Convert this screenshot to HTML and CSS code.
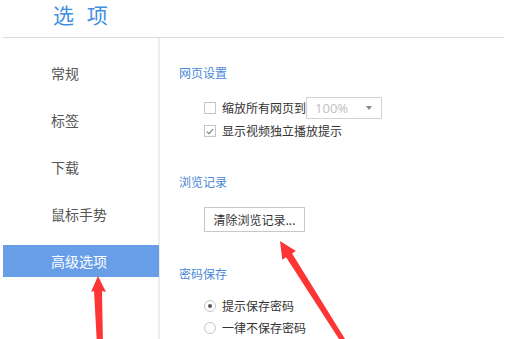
FILE: index.html
```html
<!DOCTYPE html>
<html lang="zh">
<head>
<meta charset="utf-8">
<link rel="stylesheet" href="styles.css">
</head>
<body>
<div class="page">
  <header class="header"><h1 class="title">选 项</h1></header>
  <div class="main">
    <nav class="sidebar">
      <div class="nav-item">常规</div>
      <div class="nav-item">标签</div>
      <div class="nav-item">下载</div>
      <div class="nav-item">鼠标手势</div>
      <div class="nav-item active">高级选项</div>
    </nav>
    <section class="content">
      <h2 class="sec-title">网页设置</h2>
      <div class="row row-first">
        <span class="checkbox"></span>
        <span class="label">缩放所有网页到</span>
        <span class="select"><span class="select-val">100%</span><span class="caret"></span></span>
      </div>
      <div class="row row-second">
        <span class="checkbox checked"><svg width="8" height="7" viewBox="0 0 8 7"><path d="M0.8 3.6 L3 5.6 L7.2 1" fill="none" stroke="#777" stroke-width="1.1"/></svg></span>
        <span class="label">显示视频独立播放提示</span>
      </div>
      <h2 class="sec-title sec-gap">浏览记录</h2>
      <button class="btn">清除浏览记录...</button>
      <h2 class="sec-title sec-gap2">密码保存</h2>
      <div class="row radio-first">
        <span class="radio on"></span>
        <span class="label">提示保存密码</span>
      </div>
      <div class="row radio-second">
        <span class="radio"></span>
        <span class="label">一律不保存密码</span>
      </div>
    </section>
  </div>
  <svg class="arrows" width="507" height="339" viewBox="0 0 507 339">
    <polygon fill="#fd3535" points="98,276 91,292 94,291 97,345 103,345 102,291 106,292"/>
    <polygon fill="#fd3535" points="280,241 282.3,259.7 286.1,257.3 344.7,347.9 348.9,345.3 292.1,253.5 295.9,251.1"/>
  </svg>
</div>
</body>
</html>
```

FILE: styles.css
```css
* { box-sizing: border-box; }
html, body { margin: 0; padding: 0; background: #fff; }
body {
  font-family: "Noto Sans CJK SC", "Noto Sans", sans-serif;
  color: #333;
  width: 507px;
  height: 339px;
  overflow: hidden;
}
.page { position: relative; width: 507px; height: 339px; padding-left: 3px; }
.header {
  height: 38px;
  width: 501px;
  border-bottom: 1px solid #dcdcdc;
}
.title {
  margin: 0;
  padding-left: 50px;
  font-size: 21px;
  line-height: 29px;
  font-weight: 400;
  color: #3f8fe4;
  word-spacing: 8px;
}
.main { display: flex; height: 301px; }
.sidebar {
  flex: none;
  width: 157px;
  padding-top: 19px;
  display: flex;
  flex-direction: column;
  gap: 15px;
  border-right: 2px solid #ececec;
}
.nav-item {
  height: 32px;
  line-height: 32px;
  padding-left: 48px;
  font-size: 14px;
  color: #555;
}
.nav-item.active {
  background: #689ee8;
  color: #fff;
  margin-right: -1px;
}
.content { padding-left: 19px; padding-top: 27px; flex: 1; }
.sec-title {
  margin: 0;
  font-size: 12px;
  line-height: 16px;
  font-weight: 400;
  color: #4a87d6;
}
.row {
  display: flex;
  align-items: center;
  padding-left: 25px;
  font-size: 12px;
  line-height: 16px;
}
.row-first { margin-top: 16px; height: 22px; }
.row-second { margin-top: 4px; }
.label { color: #333; margin-left: 6px; }
.checkbox {
  width: 12px; height: 12px;
  border: 1px solid #c6c6c6;
  background: #fff;
  display: flex; align-items: center; justify-content: center;
}
.select {
  width: 76px;
  height: 22px;
  border: 1px solid #d2d2d2;
  display: flex;
  align-items: center;
  justify-content: space-between;
  padding-left: 8px;
  padding-right: 8px;
}
.select-val {
  font-family: "Noto Sans", sans-serif;
  font-size: 13px;
  color: #c3c3c3;
}
.caret {
  width: 0; height: 0;
  border-left: 3.5px solid transparent;
  border-right: 3.5px solid transparent;
  border-top: 4px solid #888;
  margin-right: 1px;
}
.sec-gap { margin-top: 35px; }
.btn {
  display: block;
  margin-top: 17px;
  margin-left: 25px;
  width: 101px;
  height: 25px;
  border: 1px solid #c8c8c8;
  background: #fff;
  font-family: "Noto Sans CJK SC", "Noto Sans", sans-serif;
  font-size: 12px;
  color: #333;
  padding: 0;
}
.sec-gap2 { margin-top: 34px; }
.radio {
  width: 12px; height: 12px;
  border: 1px solid #c6c6c6;
  border-radius: 50%;
  display: flex; align-items: center; justify-content: center;
}
.radio.on::after {
  content: "";
  width: 4px; height: 4px;
  border-radius: 50%;
  background: #555;
}
.radio-first { margin-top: 16px; }
.radio-second { margin-top: 6px; }
.arrows { position: absolute; left: 0; top: 0; pointer-events: none; }
```
